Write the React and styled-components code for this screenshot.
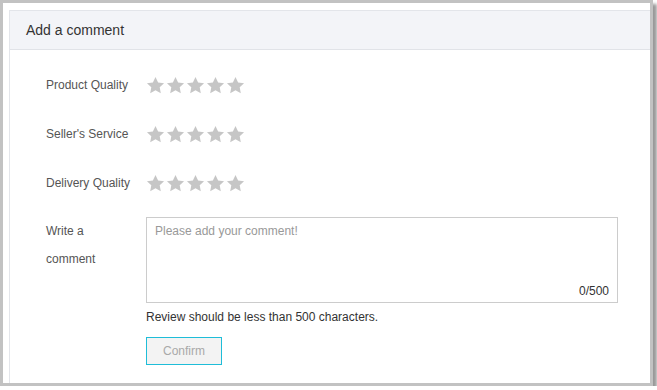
import React, { useState } from 'react';
import styled, { createGlobalStyle } from 'styled-components';

const GlobalStyle = createGlobalStyle`
  html, body {
    margin: 0;
    padding: 0;
    background: #fff;
  }
  body {
    font-family: "Liberation Sans", Arial, sans-serif;
  }
`;

const Frame = styled.div`
  width: 641px;
  height: 373px;
  border: 3px solid #c2c2c2;
  box-shadow: 4px 4px 3px rgba(0, 0, 0, 0.4);
  background: #fff;
  padding: 7px 0 0 6px;
  box-sizing: content-box;
  overflow: hidden;
  display: flex;
  flex-direction: column;
`;

const Card = styled.div`
  flex: 1;
  margin-right: -6px;
  border: 1px solid #e3e5ea;
  border-right: none;
  border-bottom: none;
  display: flex;
  flex-direction: column;
`;

const Header = styled.div`
  height: 38px;
  display: flex;
  align-items: center;
  padding-left: 16px;
  background: #f3f4f8;
  border-bottom: 1px solid #e1e3e8;
  font-size: 14px;
  color: #333;
`;

const Body = styled.div`
  padding: 23px 0 0 36px;
  display: flex;
  flex-direction: column;
`;

const Row = styled.div`
  display: flex;
  align-items: ${p => (p.$top ? 'flex-start' : 'center')};
  min-height: 24px;
  margin-bottom: ${p => p.$gap || 0}px;
`;

const Label = styled.div`
  width: 100px;
  flex-shrink: 0;
  font-size: 12px;
  color: #555;
  line-height: ${p => p.$lh || 24}px;
`;

const Stars = styled.div`
  display: flex;
  gap: 1px;
`;

const StarBtn = styled.span`
  width: 19px;
  height: 19px;
  display: block;
  cursor: pointer;
  color: ${p => (p.$on ? '#f7ba2a' : '#c6c6c6')};
`;

const Field = styled.div`
  display: flex;
  flex-direction: column;
`;

const Box = styled.div`
  width: 470px;
  height: 84px;
  border: 1px solid #cccccc;
  display: flex;
  flex-direction: column;
`;

const Area = styled.textarea`
  flex: 1;
  border: none;
  outline: none;
  resize: none;
  padding: 6px 8px 0;
  font-family: "Liberation Sans", Arial, sans-serif;
  font-size: 12px;
  color: #333;
  &::placeholder {
    color: #999;
  }
`;

const Counter = styled.div`
  text-align: right;
  padding: 0 8px 3px 0;
  font-size: 12px;
  color: #333;
  line-height: 16px;
`;

const Hint = styled.div`
  margin-top: 5px;
  font-size: 12px;
  line-height: 18px;
  color: #333;
`;

const Confirm = styled.button`
  margin-top: 11px;
  width: 76px;
  height: 28px;
  border: 1px solid #1fbdd8;
  background: #f3f3f3;
  color: #a9a9a9;
  font-family: "Liberation Sans", Arial, sans-serif;
  font-size: 12px;
  padding: 0;
  cursor: pointer;
`;

function Star() {
  return (
    <svg width="19" height="19" viewBox="0 0 24 24">
      <path
        fill="currentColor"
        d="M12 1.2l3.3 6.9 7.5.9-5.5 5.2 1.4 7.5L12 18l-6.7 3.7 1.4-7.5-5.5-5.2 7.5-.9z"
      />
    </svg>
  );
}

function Rating({ value, onChange }) {
  return (
    <Stars>
      {[1, 2, 3, 4, 5].map(n => (
        <StarBtn key={n} $on={n <= value} onClick={() => onChange(n)}>
          <Star />
        </StarBtn>
      ))}
    </Stars>
  );
}

const items = ['Product Quality', "Seller's Service", 'Delivery Quality'];

export default function App() {
  const [scores, setScores] = useState([0, 0, 0]);
  const [text, setText] = useState('');

  return (
    <>
      <GlobalStyle />
      <Frame>
        <Card>
          <Header>Add a comment</Header>
          <Body>
            {items.map((name, i) => (
              <Row key={name} $gap={i === 2 ? 22 : 25}>
                <Label>{name}</Label>
                <Rating
                  value={scores[i]}
                  onChange={v => setScores(s => s.map((x, j) => (j === i ? v : x)))}
                />
              </Row>
            ))}
            <Row $top>
              <Label $lh={28}>
                Write a
                <br />
                comment
              </Label>
              <Field>
                <Box>
                  <Area
                    placeholder="Please add your comment!"
                    maxLength={500}
                    value={text}
                    onChange={e => setText(e.target.value)}
                  />
                  <Counter>{text.length}/500</Counter>
                </Box>
                <Hint>Review should be less than 500 characters.</Hint>
                <div>
                  <Confirm>Confirm</Confirm>
                </div>
              </Field>
            </Row>
          </Body>
        </Card>
      </Frame>
    </>
  );
}
